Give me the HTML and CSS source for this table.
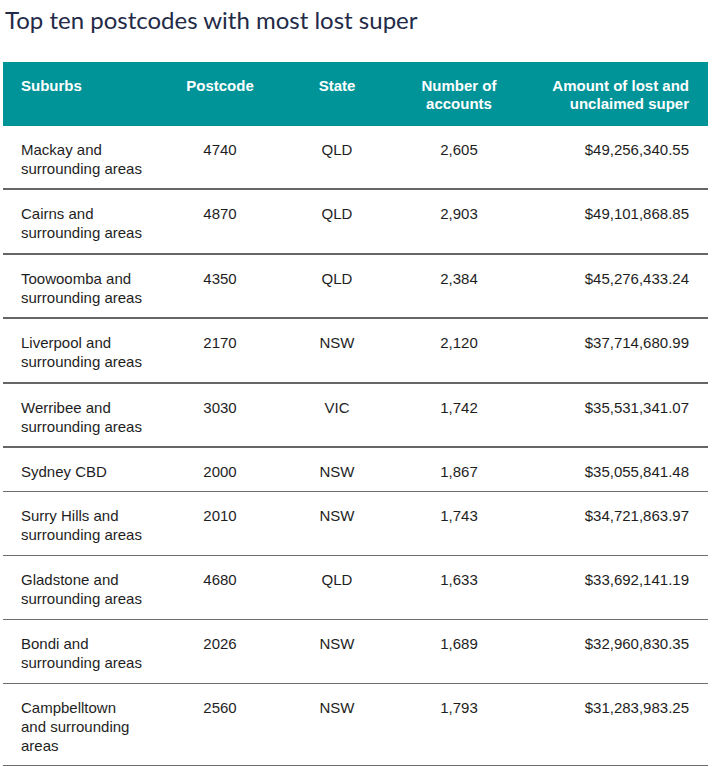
FILE: index.html
```html
<!DOCTYPE html>
<html>
<head>
<meta charset="utf-8">
<link rel="stylesheet" href="styles.css">
</head>
<body>
<h1 class="title">Top ten postcodes with most lost super</h1>
<table class="tbl">
  <colgroup>
    <col class="c1"><col class="c2"><col class="c3"><col class="c4"><col class="c5">
  </colgroup>
  <thead>
    <tr>
      <th class="l">Suburbs</th>
      <th>Postcode</th>
      <th>State</th>
      <th>Number of<br>accounts</th>
      <th class="r">Amount of lost and<br>unclaimed super</th>
    </tr>
  </thead>
  <tbody>
    <tr class="thick"><td class="l">Mackay and<br>surrounding areas</td><td>4740</td><td>QLD</td><td>2,605</td><td class="r">$49,256,340.55</td></tr>
    <tr class="thick"><td class="l">Cairns and<br>surrounding areas</td><td>4870</td><td>QLD</td><td>2,903</td><td class="r">$49,101,868.85</td></tr>
    <tr class="thick"><td class="l">Toowoomba and<br>surrounding areas</td><td>4350</td><td>QLD</td><td>2,384</td><td class="r">$45,276,433.24</td></tr>
    <tr class="thick"><td class="l">Liverpool and<br>surrounding areas</td><td>2170</td><td>NSW</td><td>2,120</td><td class="r">$37,714,680.99</td></tr>
    <tr class="thick"><td class="l">Werribee and<br>surrounding areas</td><td>3030</td><td>VIC</td><td>1,742</td><td class="r">$35,531,341.07</td></tr>
    <tr class="single"><td class="l">Sydney CBD</td><td>2000</td><td>NSW</td><td>1,867</td><td class="r">$35,055,841.48</td></tr>
    <tr><td class="l">Surry Hills and<br>surrounding areas</td><td>2010</td><td>NSW</td><td>1,743</td><td class="r">$34,721,863.97</td></tr>
    <tr><td class="l">Gladstone and<br>surrounding areas</td><td>4680</td><td>QLD</td><td>1,633</td><td class="r">$33,692,141.19</td></tr>
    <tr><td class="l">Bondi and<br>surrounding areas</td><td>2026</td><td>NSW</td><td>1,689</td><td class="r">$32,960,830.35</td></tr>
    <tr class="single"><td class="l">Campbelltown<br>and surrounding<br>areas</td><td>2560</td><td>NSW</td><td>1,793</td><td class="r">$31,283,983.25</td></tr>
  </tbody>
</table>
</body>
</html>
```

FILE: styles.css
```css
html, body {
  margin: 0;
  padding: 0;
  background: #ffffff;
}
body {
  padding: 0 3px;
}
.title {
  margin: 0 0 0 2px;
  padding-top: 6px;
  height: 62px;
  box-sizing: border-box;
  font-family: "Lato", "Open Sans", sans-serif;
  font-weight: 400;
  font-size: 24px;
  line-height: 28px;
  color: #232a48;
}
.tbl {
  width: 705px;
  border-collapse: collapse;
  table-layout: fixed;
  font-family: "Liberation Sans", Arial, sans-serif;
  font-size: 15px;
  line-height: 19px;
  color: #1e1e1e;
}
.c1 { width: 157px; }
.c2 { width: 120px; }
.c3 { width: 114px; }
.c4 { width: 130px; }
.c5 { width: 184px; }
.tbl th {
  background: #009499;
  color: #ffffff;
  font-weight: 700;
  text-align: center;
  vertical-align: top;
  line-height: 18px;
  padding: 15px 0 13px;
  height: 36px;
}
.tbl td {
  text-align: center;
  vertical-align: top;
  padding: 14px 0 11px;
  border-bottom: 1px solid #6e6e6e;
}
.tbl tr.single td {
  padding-bottom: 10px;
}
.tbl tr.thick td {
  padding-bottom: 10.4px;
  border-bottom: 2px solid #666666;
}
.tbl .l {
  text-align: left;
  padding-left: 18px;
}
.tbl .r {
  text-align: right;
  padding-right: 19px;
}
```
